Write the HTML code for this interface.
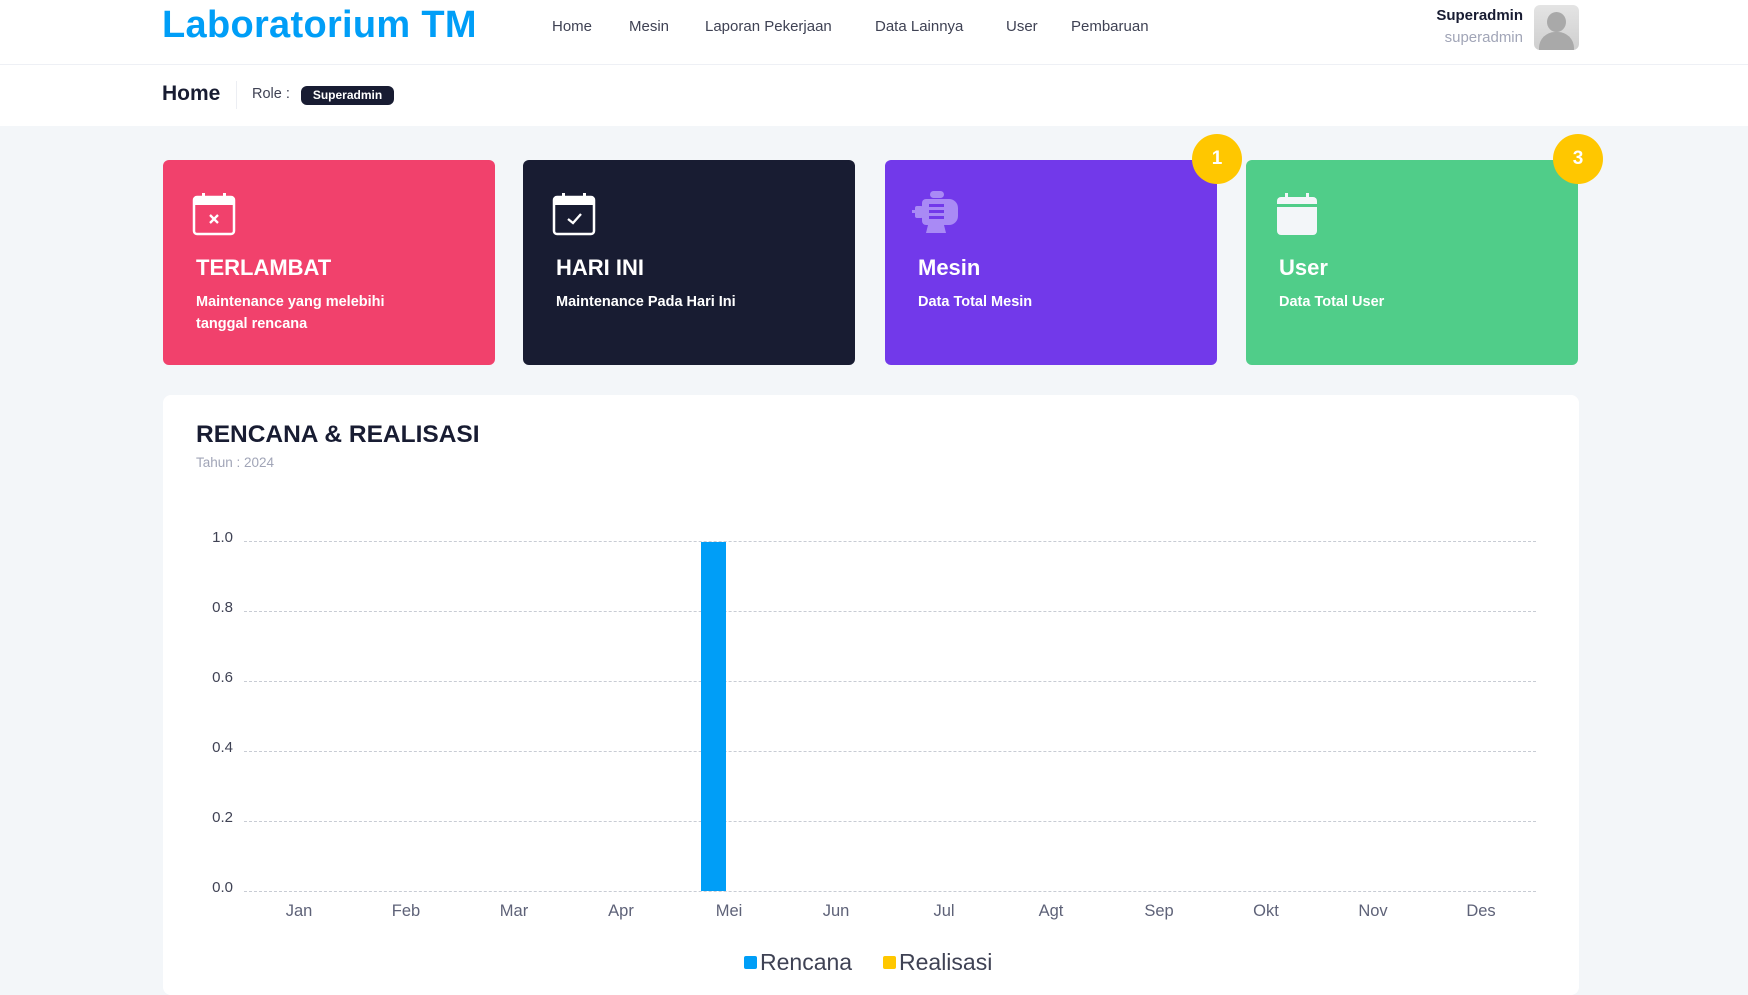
<!DOCTYPE html>
<html><head><meta charset="utf-8"><style>
*{margin:0;padding:0;box-sizing:border-box}
body{width:1748px;height:984px;overflow:hidden;background:#f3f6f9;font-family:"Liberation Sans",sans-serif;position:relative}
.abs{position:absolute}
.hdr{left:0;top:0;width:1748px;height:65px;background:#fff;border-bottom:1px solid #eef0f5}
.logo{left:162px;top:4px;font-size:38px;font-weight:bold;color:#009ef7;letter-spacing:0.3px}
.nav{top:18px;font-size:15px;color:#3f4254}
.sub{left:0;top:65px;width:1748px;height:61px;background:#fff}
.card{top:160px;width:332px;height:205px;border-radius:6px;color:#fff}
.card h3{position:absolute;left:33px;top:95px;font-size:22px;font-weight:bold}
.card p{position:absolute;left:33px;top:131px;font-size:14.5px;line-height:22px;font-weight:bold}
.card svg{position:absolute;left:28px;top:31px}
.badge{width:50px;height:50px;border-radius:50%;background:#ffc700;color:#fff;font-weight:bold;font-size:19px;text-align:center;line-height:50px}
.chart{left:163px;top:395px;width:1416px;height:600px;background:#fff;border-radius:8px}
.yl{font-size:15px;color:#3f4254;width:40px;text-align:right}
.gl{left:244px;width:1292px;border-top:1px dashed #c8ccd4}
.ml{font-size:16.5px;color:#5e6278;width:60px;text-align:center;top:902px}
</style></head><body>
<div class="abs hdr"></div>
<div class="abs logo">Laboratorium TM</div>
<div class="abs nav" style="left:552px">Home</div>
<div class="abs nav" style="left:629px">Mesin</div>
<div class="abs nav" style="left:705px">Laporan Pekerjaan</div>
<div class="abs nav" style="left:875px">Data Lainnya</div>
<div class="abs nav" style="left:1006px">User</div>
<div class="abs nav" style="left:1071px">Pembaruan</div>
<div class="abs" style="right:225px;top:7px;font-size:15px;font-weight:bold;color:#181c32">Superadmin</div>
<div class="abs" style="right:225px;top:29px;font-size:15px;color:#a1a5b7">superadmin</div>
<div class="abs" style="left:1534px;top:5px;width:45px;height:45px;border-radius:6px;background:linear-gradient(#e4e4e4,#cfcfcf);overflow:hidden">
<div class="abs" style="left:13px;top:7px;width:19px;height:20px;border-radius:50%;background:#a9a9a9"></div>
<div class="abs" style="left:5px;top:27px;width:35px;height:26px;border-radius:16px 16px 0 0;background:#a9a9a9"></div></div>
<div class="abs sub"></div>
<div class="abs" style="left:162px;top:82px;font-size:21px;font-weight:bold;color:#181c32">Home</div>
<div class="abs" style="left:236px;top:81px;width:1px;height:28px;background:#eceef3"></div>
<div class="abs" style="left:252px;top:86px;font-size:14.5px;color:#3f4254">Role :</div>
<div class="abs" style="left:301px;top:86px;width:93px;height:19px;border-radius:6px;background:#181c32;color:#fff;font-size:12px;font-weight:bold;text-align:center;line-height:19px">Superadmin</div>

<div class="abs card" style="left:163px;background:#f1416c">
<svg width="46" height="46" viewBox="0 0 46 46"><rect x="3" y="6" width="40" height="37" rx="3" fill="none" stroke="#fff" stroke-width="2.5"/><rect x="3" y="6" width="40" height="8" fill="#fff"/><rect x="11" y="2" width="3" height="7" fill="#fff"/><rect x="32" y="2" width="3" height="7" fill="#fff"/><path d="M19 24l8 8M27 24l-8 8" stroke="#fff" stroke-width="2.3"/></svg>
<h3>TERLAMBAT</h3><p>Maintenance yang melebihi<br>tanggal rencana</p></div>
<div class="abs card" style="left:523px;background:#181c32">
<svg width="46" height="46" viewBox="0 0 46 46"><rect x="3" y="6" width="40" height="37" rx="3" fill="none" stroke="#fff" stroke-width="2.5"/><rect x="3" y="6" width="40" height="8" fill="#fff"/><rect x="11" y="2" width="3" height="7" fill="#fff"/><rect x="32" y="2" width="3" height="7" fill="#fff"/><path d="M17 28l5 4 8-9" stroke="#fff" stroke-width="2.3" fill="none"/></svg>
<h3>HARI INI</h3><p>Maintenance Pada Hari Ini</p></div>
<div class="abs card" style="left:885px;background:#7239ea">
<svg width="50" height="46" viewBox="0 0 50 46" style="left:27px;top:29px"><g fill="#a98af5"><rect x="18" y="2" width="14" height="7" rx="3.5"/><rect x="10" y="10" width="28" height="26" rx="4"/><path d="M34 10h3a9 9 0 0 1 9 9v8a9 9 0 0 1-9 9h-3z"/><rect x="3" y="17" width="8" height="12" rx="2"/><rect x="0" y="21" width="4" height="3"/><path d="M16 36h16l2 8H14z"/></g><g fill="#7239ea"><rect x="17" y="15" width="15" height="3"/><rect x="17" y="21" width="15" height="3"/><rect x="17" y="27" width="15" height="3"/></g></svg>
<h3>Mesin</h3><p>Data Total Mesin</p></div>
<div class="abs card" style="left:1246px;background:#50cd89">
<svg width="46" height="46" viewBox="0 0 46 46"><rect x="3" y="6" width="40" height="38" rx="4" fill="#f3f6f9"/><rect x="3" y="13" width="40" height="3" fill="#50cd89"/><rect x="11" y="2" width="3" height="6" fill="#f3f6f9"/><rect x="32" y="2" width="3" height="6" fill="#f3f6f9"/></svg>
<h3>User</h3><p>Data Total User</p></div>
<div class="abs badge" style="left:1192px;top:134px">1</div>
<div class="abs badge" style="left:1553px;top:134px">3</div>

<div class="abs chart"></div>
<div class="abs" style="left:196px;top:421px;font-size:24.5px;font-weight:bold;color:#181c32">RENCANA &amp; REALISASI</div>
<div class="abs" style="left:196px;top:455px;font-size:13.5px;color:#a1a5b7">Tahun : 2024</div>

<div class="abs yl" style="left:193px;top:529px">1.0</div>
<div class="abs yl" style="left:193px;top:599px">0.8</div>
<div class="abs yl" style="left:193px;top:669px">0.6</div>
<div class="abs yl" style="left:193px;top:739px">0.4</div>
<div class="abs yl" style="left:193px;top:809px">0.2</div>
<div class="abs yl" style="left:193px;top:879px">0.0</div>
<div class="abs gl" style="top:541px"></div>
<div class="abs gl" style="top:611px"></div>
<div class="abs gl" style="top:681px"></div>
<div class="abs gl" style="top:751px"></div>
<div class="abs gl" style="top:821px"></div>
<div class="abs gl" style="top:891px"></div>
<div class="abs" style="left:701px;top:542px;width:25px;height:349px;background:#009ef7"></div>

<div class="abs ml" style="left:269px">Jan</div>
<div class="abs ml" style="left:376px">Feb</div>
<div class="abs ml" style="left:484px">Mar</div>
<div class="abs ml" style="left:591px">Apr</div>
<div class="abs ml" style="left:699px">Mei</div>
<div class="abs ml" style="left:806px">Jun</div>
<div class="abs ml" style="left:914px">Jul</div>
<div class="abs ml" style="left:1021px">Agt</div>
<div class="abs ml" style="left:1129px">Sep</div>
<div class="abs ml" style="left:1236px">Okt</div>
<div class="abs ml" style="left:1343px">Nov</div>
<div class="abs ml" style="left:1451px">Des</div>

<div class="abs" style="left:744px;top:956px;width:13px;height:13px;background:#009ef7;border-radius:2px"></div>
<div class="abs" style="left:760px;top:949px;font-size:23px;color:#3f4254">Rencana</div>
<div class="abs" style="left:883px;top:956px;width:13px;height:13px;background:#ffc700;border-radius:2px"></div>
<div class="abs" style="left:899px;top:949px;font-size:23px;color:#3f4254">Realisasi</div>
</body></html>
